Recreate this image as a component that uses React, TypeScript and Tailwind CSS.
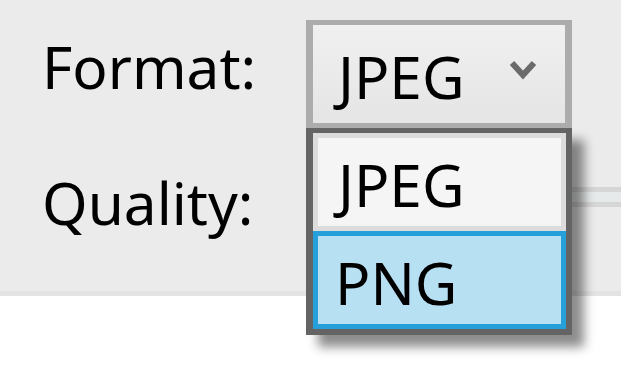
import React from "react";

const formats = ["JPEG", "PNG"];

const Chevron = () => (
  <svg width="28" height="22" viewBox="0 0 28 22" className="block">
    <path d="M3 3 L14 15 L25 3" fill="none" stroke="#6b6b6b" strokeWidth="6" />
  </svg>
);

export default function App() {
  const selected = "PNG";

  return (
    <div className="relative w-[621px] h-[365px] overflow-hidden bg-white font-['Noto_Sans',sans-serif] text-black">
      {/* settings panel */}
      <div className="h-[296px] bg-[#ebebeb] border-b-[5px] border-[#e3e3e3]">
        {/* Format row */}
        <div className="flex pt-[20px]">
          <div className="w-[306px] pl-[42px] pt-[17px] text-[58.5px] leading-none">Format:</div>
          <div className="relative w-[266px] h-[108px] border-x-[7px] border-y-[5px] border-[#acacac] bg-gradient-to-b from-[#f0f0f0] to-[#e5e5e5]">
            <div className="pl-[25px] pt-[22px] text-[58.5px] leading-none">JPEG</div>
            <div className="absolute left-[196px] top-[35px]">
              <Chevron />
            </div>
          </div>
        </div>

        {/* Quality row */}
        <div className="flex">
          <div className="w-[306px] shrink-0 pl-[42px] pt-[44.5px] text-[58.5px] leading-none">Quality:</div>
          <div className="flex-1 mt-[58.7px] h-[20px] border-y-[5px] border-[#d6d6d6] bg-[#e7eaea]" />
        </div>
      </div>

      {/* open dropdown list */}
      <div className="absolute left-[306px] top-[128px] w-[266px] border-l-[7px] border-r-[6px] border-t-[5px] border-b-[6px] border-[#646464] shadow-[12px_12px_10px_rgba(0,0,0,0.45)]">
        {formats.map((f) => (
          <div
            key={f}
            className={
              f === selected
                ? "h-[98px] border-[5px] border-[#26a0da] bg-[#b8e0f3] pl-[17px] pt-[17px] text-[58.5px] leading-none"
                : "h-[98px] border-[5px] border-[#dcdcdc] bg-[#f5f5f5] pl-[20px] pt-[17px] text-[58.5px] leading-none"
            }
          >
            {f}
          </div>
        ))}
      </div>
    </div>
  );
}
